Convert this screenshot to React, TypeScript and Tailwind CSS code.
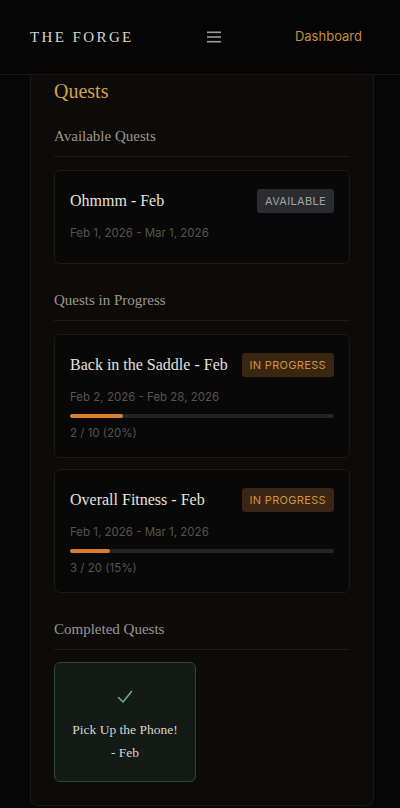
import React from 'react'

const serif = { fontFamily: '"Liberation Serif", "DejaVu Serif", serif' }

type Quest = {
  title: string
  dates: string
  done?: number
  total?: number
}

const available: Quest[] = [{ title: 'Ohmmm - Feb', dates: 'Feb 1, 2026 - Mar 1, 2026' }]

const inProgress: Quest[] = [
  { title: 'Back in the Saddle - Feb', dates: 'Feb 2, 2026 - Feb 28, 2026', done: 2, total: 10 },
  { title: 'Overall Fitness - Feb', dates: 'Feb 1, 2026 - Mar 1, 2026', done: 3, total: 20 },
]

const SectionTitle = ({ children }: { children: React.ReactNode }) => (
  <div className="border-b border-[#1f1a13] pb-[8px]">
    <h3 className="text-[15px] leading-6 text-[#9c968d]" style={serif}>
      {children}
    </h3>
  </div>
)

const QuestCard = ({ q }: { q: Quest }) => {
  const pct = q.total ? Math.round(((q.done ?? 0) / q.total) * 100) : 0
  const active = q.total !== undefined
  return (
    <div className={`rounded-md border border-[#1e1912] bg-[#080808] px-[15px] pt-[16px] ${active ? 'pb-[14px]' : 'pb-[20px]'}`}>
      <div className="flex h-7 items-center justify-between">
        <span className="whitespace-nowrap text-[16px] text-[#e6e2da]" style={serif}>
          {q.title}
        </span>
        {active ? (
          <span className="whitespace-nowrap rounded-[3px] bg-[#3a2613] px-2 py-[4px] text-[11px] tracking-[0.03em] text-[#d39442]">IN PROGRESS</span>
        ) : (
          <span className="whitespace-nowrap rounded-[3px] bg-[#2a2c30] px-2 py-[4px] text-[11px] tracking-[0.03em] text-[#9fa3a9]">AVAILABLE</span>
        )}
      </div>
      <p className="mt-2 text-[11.5px] leading-5 text-[#56534e]">{q.dates}</p>
      {active && (
        <>
          <div className="mt-[7px] h-[4px] w-full rounded-full bg-[#242426]">
            <div className="h-full rounded-full bg-[#d97c2c]" style={{ width: `${pct}%` }} />
          </div>
          <p className="mt-[5px] text-[11.5px] leading-5 text-[#56534e]">
            {q.done} / {q.total} ({pct}%)
          </p>
        </>
      )}
    </div>
  )
}

export default function App() {
  return (
    <div className="min-h-[808px] bg-[#070707]" style={{ fontFamily: 'Inter, "Liberation Sans", sans-serif' }}>
      {/* Header */}
      <header className="flex h-[75px] items-center justify-between border-b border-[#1a1712] bg-[#050505] pl-[30px] pr-[38px]">
        <span className="text-[15px] tracking-[0.16em] text-[#d9d5cd]" style={serif}>
          THE FORGE
        </span>
        <svg width="14" height="12" viewBox="0 0 14 12">
          <rect x="0" y="0.5" width="14" height="1.6" fill="#9a9a9a" />
          <rect x="0" y="5.2" width="14" height="1.6" fill="#9a9a9a" />
          <rect x="0" y="9.9" width="14" height="1.6" fill="#9a9a9a" />
        </svg>
        <span className="text-[13px] text-[#c98f3b]">Dashboard</span>
      </header>

      {/* Panel */}
      <main className="mx-[30px] w-[344px] rounded-b-lg border border-t-0 border-[#1c1812] bg-[#0c0b09] px-[23px] pb-[23px] pt-[2px]">
        <h2 className="text-[20px] leading-7 text-[#d6a04c]" style={serif}>
          Quests
        </h2>

        <section className="mt-[19px]">
          <SectionTitle>Available Quests</SectionTitle>
          <div className="mt-[13px] flex flex-col gap-3">
            {available.map((q) => (
              <QuestCard key={q.title} q={q} />
            ))}
          </div>
        </section>

        <section className="mt-[24px]">
          <SectionTitle>Quests in Progress</SectionTitle>
          <div className="mt-[13px] flex flex-col gap-[11px]">
            {inProgress.map((q) => (
              <QuestCard key={q.title} q={q} />
            ))}
          </div>
        </section>

        <section className="mt-[24px]">
          <SectionTitle>Completed Quests</SectionTitle>
          <div className="mt-[12px] grid grid-cols-2 gap-3">
            <div className="flex h-[120px] flex-col items-center justify-center rounded-md border border-[#2c4934] bg-[#141a16] pt-[9px] text-center">
              <svg width="16" height="14" viewBox="0 0 16 14" fill="none">
                <path d="M1.5 7.5 L6 12 L14.5 1.5" stroke="#5bbd77" strokeWidth="1.5" strokeLinecap="round" strokeLinejoin="round" />
              </svg>
              <p className="mt-[14px] text-[13.5px] leading-[23px] text-[#d9d5cd]" style={serif}>
                Pick Up the Phone!
                <br />- Feb
              </p>
            </div>
          </div>
        </section>
      </main>
    </div>
  )
}
